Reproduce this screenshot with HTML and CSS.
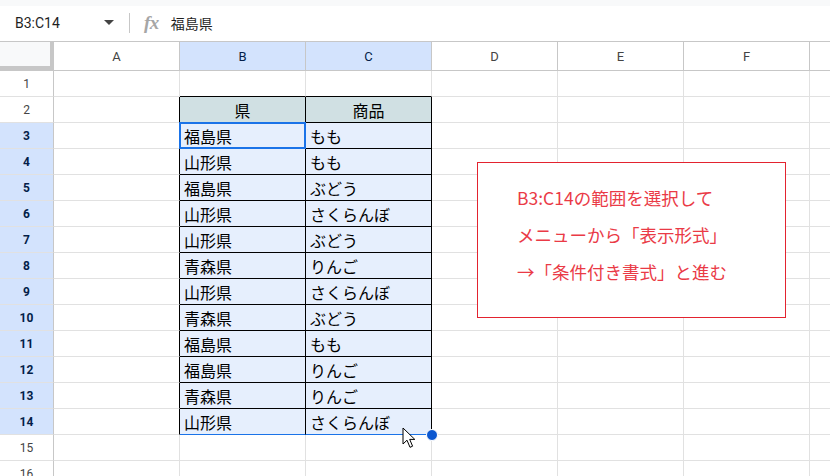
FILE: index.html
```html
<!DOCTYPE html>
<html lang="ja">
<head>
  <meta charset="UTF-8">
  <title>条件付き書式</title>
  <link rel="stylesheet" href="styles.css">
</head>
<body>
  <div class="page">
    <div class="topstrip"></div>
    <div class="fbar">
      <div class="namebox">
        <span class="ref">B3:C14</span>
        <span class="caret"></span>
      </div>
      <div class="divider"></div>
      <span class="fx">fx</span>
      <span class="ftext">福島県</span>
    </div>

    <div class="grid">
      <!-- column headers -->
      <div class="corner"></div>
      <div class="ch">A</div>
      <div class="ch on">B</div>
      <div class="ch on">C</div>
      <div class="ch">D</div>
      <div class="ch">E</div>
      <div class="ch">F</div>
      <div class="ch"></div>

      <div class="rh">1</div>
      <div></div><div class="kt"></div><div class="kt"></div><div></div><div></div><div></div><div></div>

      <div class="rh">2</div>
      <div class="kl"></div><div class="t th">県</div><div class="t th">商品</div><div></div><div></div><div></div><div></div>

      <div class="rh on">3</div>
      <div class="kl"></div>
      <div class="t s">福島県<span class="active"></span></div>
      <div class="t s">もも</div>
      <div></div><div></div><div></div><div></div>

      <div class="rh on">4</div>
      <div class="kl"></div><div class="t s">山形県</div><div class="t s">もも</div><div></div><div></div><div></div><div></div>

      <div class="rh on">5</div>
      <div class="kl"></div><div class="t s">福島県</div><div class="t s">ぶどう</div><div></div><div></div><div></div><div></div>

      <div class="rh on">6</div>
      <div class="kl"></div><div class="t s">山形県</div><div class="t s">さくらんぼ</div><div></div><div></div><div></div><div></div>

      <div class="rh on">7</div>
      <div class="kl"></div><div class="t s">山形県</div><div class="t s">ぶどう</div><div></div><div></div><div></div><div></div>

      <div class="rh on">8</div>
      <div class="kl"></div><div class="t s">青森県</div><div class="t s">りんご</div><div></div><div></div><div></div><div></div>

      <div class="rh on">9</div>
      <div class="kl"></div><div class="t s">山形県</div><div class="t s">さくらんぼ</div><div></div><div></div><div></div><div></div>

      <div class="rh on">10</div>
      <div class="kl"></div><div class="t s">青森県</div><div class="t s">ぶどう</div><div></div><div></div><div></div><div></div>

      <div class="rh on">11</div>
      <div class="kl"></div><div class="t s">福島県</div><div class="t s">もも</div><div></div><div></div><div></div><div></div>

      <div class="rh on">12</div>
      <div class="kl"></div><div class="t s">福島県</div><div class="t s">りんご</div><div></div><div></div><div></div><div></div>

      <div class="rh on">13</div>
      <div class="kl"></div><div class="t s">青森県</div><div class="t s">りんご</div><div></div><div></div><div></div><div></div>

      <div class="rh on">14</div>
      <div class="kl"></div>
      <div class="t s last">山形県</div>
      <div class="t s last">さくらんぼ
        <span class="handle"></span>
        <svg class="cursor" width="14" height="22" viewBox="0 0 14 22">
          <path d="M1 1V17L5 13.2L8 20.3L10.6 19.2L7.7 12.4H12.8Z" fill="#fff" stroke="#000" stroke-width="1" stroke-linejoin="round"/>
        </svg>
      </div>
      <div></div><div></div><div></div><div></div>

      <div class="rh">15</div>
      <div></div><div></div><div></div><div></div><div></div><div></div><div></div>

      <div class="rh">16</div>
      <div></div><div></div><div></div><div></div><div></div><div></div><div></div>
    </div>

    <div class="note">
      B3:C14の範囲を選択して<br>
      メニューから「表示形式」<br>
      →「条件付き書式」と進む
    </div>
  </div>
</body>
</html>
```

FILE: styles.css
```css
body {
  margin: 0;
  font-family: Roboto, "Noto Sans CJK JP", sans-serif;
  background: #fff;
  color: #1f1f1f;
}
.page {
  position: relative;
  width: 830px;
  height: 476px;
  overflow: hidden;
}
.topstrip {
  height: 6px;
  background: #f8f9fa;
}

/* formula bar */
.fbar {
  height: 33px;
  padding-bottom: 2px;
  display: flex;
  align-items: center;
  border-bottom: 1px solid #c7c7c7;
}
.namebox {
  width: 99px;
  padding-left: 15px;
  display: flex;
  align-items: center;
  justify-content: space-between;
  font-size: 14px;
}
.caret {
  width: 0;
  height: 0;
  border-left: 5px solid transparent;
  border-right: 5px solid transparent;
  border-top: 5px solid #444;
}
.divider {
  width: 1px;
  height: 20px;
  margin-left: 15px;
  background: #c7c7c7;
}
.fx {
  margin-left: 14px;
  font-family: "Liberation Serif", serif;
  font-style: italic;
  font-weight: bold;
  font-size: 19px;
  color: #a6a6a6;
  letter-spacing: -0.5px;
}
.ftext {
  margin-left: 12px;
  font-family: "Noto Sans CJK JP", sans-serif;
  font-size: 14px;
}

/* sheet grid */
.grid {
  display: grid;
  grid-template-columns: 54px repeat(6, 126px) 20px;
  grid-template-rows: 29px;
  grid-auto-rows: 26px;
}
.grid > div {
  box-sizing: border-box;
  border-right: 1px solid #e1e1e1;
  border-bottom: 1px solid #e1e1e1;
}
.grid > div:nth-child(8n) { border-right: 0; }

.corner {
  background: #f8f9fa;
  border-right: 4px solid #c7c7c7 !important;
  border-bottom: 5px solid #c7c7c7 !important;
}
.ch {
  display: flex;
  align-items: center;
  justify-content: center;
  font-size: 13px;
  color: #444;
  border-right-color: #c7c7c7 !important;
  border-bottom-color: #c7c7c7 !important;
}
.rh {
  display: flex;
  align-items: center;
  justify-content: center;
  font-size: 12px;
  color: #444;
  border-right-color: #c7c7c7 !important;
}
.on {
  background: #d3e3fd;
  color: #041e49;
}
.rh.on { font-weight: bold; }

/* data table B2:C14 */
.t {
  display: flex;
  align-items: center;
  padding-left: 4px;
  font-family: "Noto Sans CJK JP", sans-serif;
  font-size: 16px;
  color: #000;
  border-right-color: #000 !important;
  border-bottom-color: #000 !important;
}
.kl { border-right-color: #000 !important; }
.kt { border-bottom-color: #000 !important; }
.th {
  justify-content: center;
  padding-left: 0;
  background: #d0e0e3;
}
.s {
  position: relative;
  background: #e6effd;
}
.last { border-bottom-color: #1a73e8 !important; }

.active {
  position: absolute;
  top: -1px;
  left: -1px;
  right: -1px;
  bottom: -1px;
  border: 2px solid #1a73e8;
}
.handle {
  position: absolute;
  right: -7px;
  bottom: -7px;
  width: 10px;
  height: 10px;
  border: 1px solid #fff;
  border-radius: 50%;
  background: #0b57d0;
}
.cursor {
  position: absolute;
  left: 96px;
  top: 18px;
  z-index: 2;
}

/* callout */
.note {
  position: absolute;
  left: 477px;
  top: 162px;
  width: 309px;
  height: 156px;
  box-sizing: border-box;
  padding: 16px 0 0 39px;
  border: 1px solid #e3232f;
  background: #fff;
  color: #ea3a46;
  font-family: "Noto Sans CJK JP", sans-serif;
  font-size: 17.5px;
  line-height: 37px;
}
```
